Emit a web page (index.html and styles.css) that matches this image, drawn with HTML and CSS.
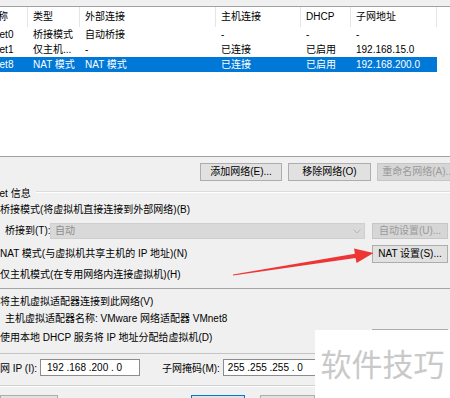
FILE: index.html
```html
<!DOCTYPE html>
<html lang="zh-CN">
<head>
  <meta charset="UTF-8">
  <title>虚拟网络编辑器</title>
  <link rel="stylesheet" href="styles.css">
</head>
<body>
  <div class="net-list">
    <div class="list-row list-head">
      <div class="cell name">名称</div>
      <div class="cell">类型</div>
      <div class="cell">外部连接</div>
      <div class="cell">主机连接</div>
      <div class="cell">DHCP</div>
      <div class="cell">子网地址</div>
      <div class="cell filler"></div>
    </div>
    <div class="list-row">
      <div class="cell name">VMnet0</div>
      <div class="cell">桥接模式</div>
      <div class="cell">自动桥接</div>
      <div class="cell">-</div>
      <div class="cell">-</div>
      <div class="cell">-</div>
      <div class="cell filler"></div>
    </div>
    <div class="list-row">
      <div class="cell name">VMnet1</div>
      <div class="cell">仅主机...</div>
      <div class="cell">-</div>
      <div class="cell">已连接</div>
      <div class="cell">已启用</div>
      <div class="cell">192.168.15.0</div>
      <div class="cell filler"></div>
    </div>
    <div class="list-row selected">
      <div class="cell name">VMnet8</div>
      <div class="cell">NAT 模式</div>
      <div class="cell">NAT 模式</div>
      <div class="cell">已连接</div>
      <div class="cell">已启用</div>
      <div class="cell">192.168.200.0</div>
      <div class="cell filler"></div>
    </div>
  </div>

  <div class="net-actions">
    <button class="btn btn-add">添加网络(E)...</button>
    <button class="btn btn-remove">移除网络(O)</button>
    <button class="btn btn-rename" disabled>重命名网络(A)...</button>
  </div>

  <div class="group-title">
    <span class="group-label">VMnet 信息</span>
    <div class="group-line"></div>
  </div>

  <div class="opt opt-bridge">桥接模式(将虚拟机直接连接到外部网络)(B)</div>

  <div class="opt bridge-to">
    <span class="bridge-label">桥接到(T):</span>
    <div class="combo">
      <span>自动</span>
      <svg class="chevron" width="8" height="5" viewBox="0 0 8 5"><path d="M0.5 0.5 L4 4 L7.5 0.5" fill="none" stroke="#b8b8b8" stroke-width="1"/></svg>
    </div>
    <button class="btn btn-side" disabled>自动设置(U)...</button>
  </div>

  <div class="opt opt-btn-row nat-row">
    <span>NAT 模式(与虚拟机共享主机的 IP 地址)(N)</span>
    <button class="btn btn-side">NAT 设置(S)...</button>
  </div>

  <div class="opt host-only">仅主机模式(在专用网络内连接虚拟机)(H)</div>

  <div class="sep sep-dark"></div>

  <div class="opt connect-adapter">将主机虚拟适配器连接到此网络(V)</div>
  <div class="opt adapter-name">主机虚拟适配器名称: VMware 网络适配器 VMnet8</div>

  <div class="opt opt-btn-row dhcp-row">
    <span>使用本地 DHCP 服务将 IP 地址分配给虚拟机(D)</span>
    <!-- covered by the watermark, only its top edge shows -->
    <button class="btn btn-side" aria-label="DHCP 设置(P)..."></button>
  </div>

  <div class="sep sep-mid"></div>

  <div class="ip-row">
    <span class="ip-label">子网 IP (I):</span>
    <div class="ip-box">192 .168 .200 . 0</div>
    <span class="mask-label">子网掩码(M):</span>
    <div class="ip-box mask-box">255 .255 .255 . 0</div>
  </div>

  <div class="sep sep-light"></div>

  <div class="dialog-buttons">
    <button class="btn btn-restore">还原默认设置(R)</button>
    <button class="btn btn-ok">确定</button>
    <button class="btn btn-cancel">取消</button>
    <button class="btn btn-apply">应用</button>
  </div>

  <!-- annotation overlay -->
  <svg class="arrow" width="450" height="398" viewBox="0 0 450 398">
    <polygon points="233,275.6 355.5,258 356.6,263 373.5,253 354,248.6 354.9,253.8 233,274.4" fill="#ee3535"/>
  </svg>

  <div class="watermark">软件技巧</div>
</body>
</html>
```

FILE: styles.css
```css
body {
  margin: 0;
  width: 450px;
  height: 398px;
  overflow: hidden;
  position: relative;
  background: #f0f0f0;
  font-family: "Liberation Sans", "Noto Sans CJK SC", sans-serif;
  font-size: 10px;
  color: #000;
}

/* network list */
.net-list {
  margin-top: 6px;
  height: 149px;
  background: #fff;
  border-top: 1px solid #a0a0a0;
  border-bottom: 1px solid #a0a0a0;
  overflow: hidden;
}

.list-row {
  display: grid;
  grid-template-columns: 50px 52px 136px 85px 50px 86px 1fr;
  margin-left: -22px;
  height: 15px;
  line-height: 15px;
}

.list-head {
  height: 20px;
  line-height: 20px;
}

.cell {
  padding-left: 5px;
  white-space: nowrap;
  overflow: hidden;
}

.cell.name { padding-left: 1px; }
.list-head .cell.name { padding-left: 10px; }

.list-head .cell {
  border-right: 1px solid #e5e5e5;
}
.list-head .cell.filler { border-right: none; }

.list-row.selected .cell {
  background: #0078d7;
  color: #fff;
}
.list-row.selected .cell.filler { background: #fff; }

/* buttons */
.btn {
  font-family: inherit;
  font-size: 10px;
  color: #000;
  background: #e1e1e1;
  border: 1px solid #adadad;
  padding: 0;
  height: 18px;
  line-height: 16px;
  white-space: nowrap;
  overflow: hidden;
  flex-shrink: 0;
}

.btn:disabled {
  background: #d6d6d6;
  border-color: #c6c6c6;
  color: #9a9a9a;
}

.net-actions {
  display: flex;
  gap: 6px;
  margin: 6px 0 0 200px;
}

.btn-add { width: 82px; }
.btn-remove { width: 83px; }
.btn-rename { width: 82px; }

/* group box */
.group-title {
  display: flex;
  align-items: center;
  height: 14px;
  margin-top: 4px;
}

.group-label {
  margin-left: -21px;
  white-space: nowrap;
}

.group-line {
  flex: 1;
  margin-left: 5px;
  border-top: 1px solid #dcdcdc;
  border-bottom: 1px solid #fff;
}

.opt {
  height: 16px;
  line-height: 16px;
  white-space: nowrap;
}

.opt-bridge { margin-top: 3px; }

.bridge-to {
  display: flex;
  align-items: center;
  margin-top: 5px;
}

.bridge-label {
  width: 50px;
  padding-left: 5px;
  box-sizing: border-box;
}

.combo {
  width: 315px;
  height: 16px;
  box-sizing: border-box;
  background: #d9d9d9;
  border: 1px solid #cfcfcf;
  color: #8c8c8c;
  display: flex;
  align-items: center;
  justify-content: space-between;
  padding: 0 3px 0 4px;
}

.btn-side {
  width: 76px;
  margin-left: auto;
  margin-right: 2px;
}

.bridge-to .btn-side {
  height: 16px;
  line-height: 14px;
}

.opt-btn-row {
  display: flex;
  align-items: center;
  height: 18px;
}

.nat-row { margin-top: 6px; }
.host-only { margin-top: 4px; }

.sep { height: 0; }
.sep-dark {
  margin-top: 5px;
  border-top: 1px solid #a4a4a4;
}
.sep-mid {
  margin-top: 6px;
  border-top: 1px solid #c4c4c4;
}
.sep-light {
  margin-top: 9px;
  border-top: 1px solid #d0d0d0;
  border-bottom: 1px solid #fff;
}

.connect-adapter { margin-top: 5px; }
.adapter-name { margin-top: 1px; padding-left: 5px; }
.dhcp-row { margin-top: 2px; }

/* subnet fields */
.ip-row {
  display: flex;
  align-items: center;
  margin-top: 5px;
  height: 17px;
  white-space: nowrap;
}

.ip-label { margin-left: -10px; }

.ip-box {
  width: 100px;
  height: 17px;
  box-sizing: border-box;
  margin-left: 3px;
  background: #fff;
  border: 1px solid #8c8c8c;
  line-height: 15px;
  padding-left: 6px;
  white-space: pre;
}

.mask-label { margin-left: 22px; }
.mask-box { width: 110px; padding-left: 4px; }

/* dialog buttons */
.dialog-buttons {
  display: flex;
  margin-top: 8px;
}

.dialog-buttons .btn { height: 22px; }
.btn-restore { width: 58px; }
.btn-ok {
  width: 54px;
  margin-left: 133px;
  border-color: #0078d7;
}
.btn-cancel { width: 55px; margin-left: 15px; }
.btn-apply { width: 55px; margin-left: 7px; }

/* overlays */
.arrow {
  position: absolute;
  top: 0;
  left: 0;
  pointer-events: none;
}

.watermark {
  position: absolute;
  left: 315px;
  top: 330px;
  width: 135px;
  height: 68px;
  background: #fff;
  color: #c9c9c9;
  font-family: "Noto Sans CJK SC", sans-serif;
  font-size: 31px;
  line-height: 66px;
  text-align: center;
}
```
